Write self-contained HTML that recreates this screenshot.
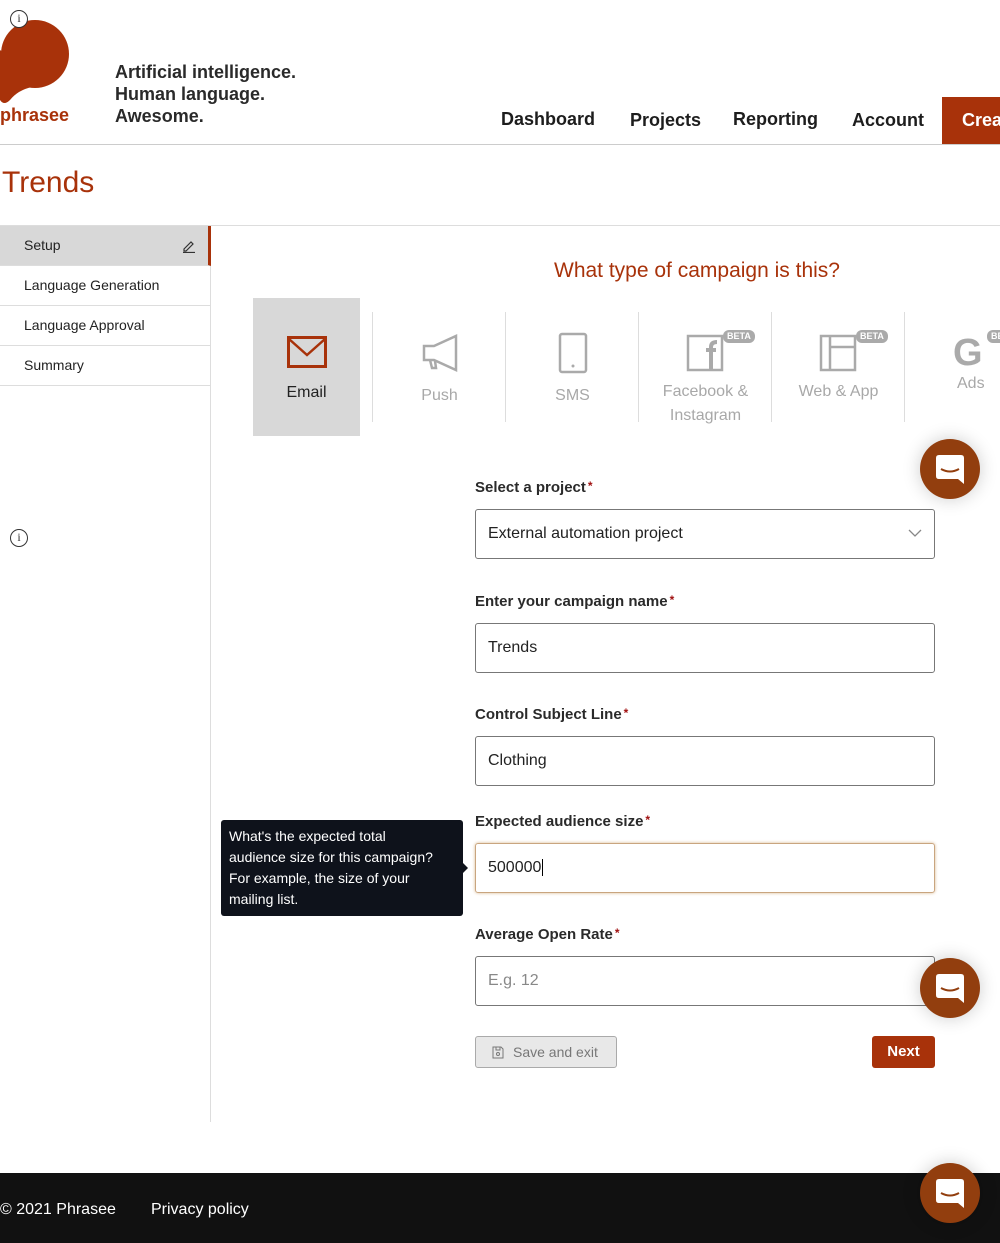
<!DOCTYPE html>
<html><head><meta charset="utf-8"><style>
*{box-sizing:border-box;margin:0;padding:0}
body{width:1000px;height:1243px;position:relative;overflow:hidden;background:#fff;font-family:"Liberation Sans",sans-serif;color:#222}
.a{position:absolute;white-space:nowrap}
.nav{font-size:18px;font-weight:bold;color:#1d1d1d;top:109px}
.side{position:absolute;left:0;width:210px;height:40px;border-bottom:1px solid #ddd;font-size:14px;padding:11px 0 0 24px;color:#222}
.lbl{font-size:15px;font-weight:bold;color:#2a2a2a;left:475px}
.lbl span{color:#a01010;font-size:12px;vertical-align:top;margin-left:2px}
.inp{position:absolute;left:475px;width:460px;height:50px;border:1px solid #777;border-radius:3px;font-size:16px;padding:15px 0 0 12px;color:#222}
.tab{position:absolute;top:312px;height:110px;border-left:1px solid #ddd;text-align:center;font-size:16px;color:#a8a8a8}
.beta{position:absolute;background:#aaa;color:#fff;font-size:9px;font-weight:bold;border-radius:6px;padding:1px 4px;line-height:11px}
.chat{position:absolute;left:920px;width:60px;height:60px;border-radius:50%;background:#923e0e;box-shadow:0 0 18px rgba(0,0,0,.2)}
.info{position:absolute;width:18px;height:18px;border:1.5px solid #333;border-radius:50%;font-size:12px;text-align:center;line-height:15px;font-family:"Liberation Serif",serif;color:#333}
</style></head><body>
<svg class="a" style="left:0;top:14px" width="72" height="92" viewBox="0 0 72 92"><circle cx="35" cy="40" r="34" fill="#a8320a"/><path d="M0 36L0 86Q4 92 10 86Q18 76 32 73L10 44Z" fill="#a8320a"/></svg>
<div class="info" style="left:10px;top:10px;background:#fff">i</div>
<div class="a" style="left:0;top:105px;font-size:18px;font-weight:bold;color:#a8320a">phrasee</div>
<div class="a" style="left:115px;top:61px;font-size:18px;font-weight:bold;line-height:22px;color:#2a2a2a">Artificial intelligence.<br>Human language.<br>Awesome.</div>
<div class="a nav" style="left:501px">Dashboard</div>
<div class="a nav" style="left:630px;top:110px">Projects</div>
<div class="a nav" style="left:733px">Reporting</div>
<div class="a nav" style="left:852px;top:110px">Account</div>
<div class="a" style="left:942px;top:97px;width:58px;height:47px;background:#a8320a;color:#fff;font-size:18px;font-weight:bold;padding:13px 0 0 20px">Create</div>
<div class="a" style="left:0;top:144px;width:1000px;height:1px;background:#ccc"></div>
<div class="a" style="left:2px;top:166px;font-size:30px;color:#a8320a">Trends</div>
<div class="a" style="left:0;top:225px;width:1000px;height:1px;background:#ddd"></div>
<div class="side" style="top:226px;background:#d8d8d8;border-right:3px solid #a8320a;width:211px">Setup
<svg style="position:absolute;left:182px;top:13px" width="14" height="14" viewBox="0 0 14 14"><path d="M2 10L9 3L11 5L4 12H2Z M1 13.5H13" fill="none" stroke="#333" stroke-width="1.2"/></svg></div>
<div class="side" style="top:266px">Language Generation</div>
<div class="side" style="top:306px">Language Approval</div>
<div class="side" style="top:346px">Summary</div>
<div class="a" style="left:210px;top:266px;width:1px;height:856px;background:#ddd"></div>
<div class="info" style="left:10px;top:529px">i</div>
<div class="a" style="left:554px;top:259px;font-size:21px;color:#a8320a">What type of campaign is this?</div>
<div class="a" style="left:253px;top:298px;width:107px;height:138px;background:#d8d8d8;text-align:center;font-size:16px;color:#222;padding-top:38px">
<svg width="40" height="32" viewBox="0 0 40 32"><rect x="1.5" y="1.5" width="37" height="29" fill="none" stroke="#a8320a" stroke-width="3"/><path d="M2 3L20 19L38 3" fill="none" stroke="#a8320a" stroke-width="2.5"/></svg>
<div style="margin-top:11px">Email</div></div>
<div class="tab" style="left:372px;width:134px;padding-top:22px"><svg width="40" height="38" viewBox="0 0 40 38"><path d="M4 12H14L36 2V36L14 26H4Z M10 26L12 34H16L15 27" fill="none" stroke="#aaa" stroke-width="2.5"/></svg><div style="margin-top:10px">Push</div></div>
<div class="tab" style="left:505px;width:134px;padding-top:20px"><svg width="30" height="42" viewBox="0 0 30 42"><rect x="2" y="2" width="26" height="38" rx="2" fill="none" stroke="#aaa" stroke-width="2.5"/><circle cx="15" cy="34" r="1.5" fill="#aaa"/></svg><div style="margin-top:8px">SMS</div></div>
<div class="tab" style="left:638px;width:134px;padding-top:22px;line-height:24px"><svg width="40" height="38" viewBox="0 0 40 38"><rect x="2" y="2" width="34" height="34" fill="none" stroke="#aaa" stroke-width="2.5"/><path d="M20 16H30M25 36V13Q25 8 31 8" fill="none" stroke="#aaa" stroke-width="4"/></svg><div>Facebook &amp;<br>Instagram</div><div class="beta" style="left:84px;top:18px">BETA</div></div>
<div class="tab" style="left:771px;width:134px;padding-top:22px;line-height:24px"><svg width="40" height="38" viewBox="0 0 40 38"><rect x="2" y="2" width="34" height="34" fill="none" stroke="#aaa" stroke-width="2.5"/><path d="M11 2V36M11 13H36" fill="none" stroke="#aaa" stroke-width="2.5"/></svg><div>Web &amp; App</div><div class="beta" style="left:84px;top:18px">BETA</div></div>
<div class="tab" style="left:904px;width:134px;padding-top:22px;line-height:24px;text-align:left"><div style="font-size:38px;font-weight:bold;line-height:38px;margin-left:48px;color:#aaa">G</div><div style="margin-left:52px">Ads</div><div class="beta" style="left:82px;top:18px">BETA</div></div>
<div class="chat" style="top:439px"><svg style="position:absolute;left:16px;top:16px" width="30" height="30" viewBox="0 0 30 30"><path d="M3 0H25Q28 0 28 3V29L22 24H3Q0 24 0 21V3Q0 0 3 0Z" fill="#fff"/><path d="M5 14Q14 19 23 14" fill="none" stroke="#923e0e" stroke-width="2"/></svg></div>
<div class="a lbl" style="top:479px">Select a project<span>*</span></div>
<div class="inp" style="top:509px">External automation project<svg style="position:absolute;right:12px;top:19px" width="14" height="9" viewBox="0 0 14 9"><path d="M1 1L7 7L13 1" fill="none" stroke="#888" stroke-width="1.3"/></svg></div>
<div class="a lbl" style="top:593px">Enter your campaign name<span>*</span></div>
<div class="inp" style="top:623px">Trends</div>
<div class="a lbl" style="top:706px">Control Subject Line<span>*</span></div>
<div class="inp" style="top:736px">Clothing</div>
<div class="a lbl" style="top:813px">Expected audience size<span>*</span></div>
<div class="inp" style="top:843px;border-color:#c9a57f;box-shadow:0 0 3px #d8b890">500000<span style="border-left:1px solid #000;margin-left:1px"></span></div>
<div class="a" style="left:221px;top:820px;width:242px;height:96px;background:#0e121b;border-radius:3px;color:#fff;font-size:14px;line-height:21px;padding:6px 8px">What's the expected total<br>audience size for this campaign?<br>For example, the size of your<br>mailing list.</div>
<div class="a" style="left:463px;top:863px;border:5px solid transparent;border-left-color:#0e121b;border-right:0"></div>
<div class="a lbl" style="top:926px">Average Open Rate<span>*</span></div>
<div class="inp" style="top:956px;color:#888">E.g. 12</div>
<div class="chat" style="top:958px"><svg style="position:absolute;left:16px;top:16px" width="30" height="30" viewBox="0 0 30 30"><path d="M3 0H25Q28 0 28 3V29L22 24H3Q0 24 0 21V3Q0 0 3 0Z" fill="#fff"/><path d="M5 14Q14 19 23 14" fill="none" stroke="#923e0e" stroke-width="2"/></svg></div>
<div class="a" style="left:475px;top:1036px;width:142px;height:32px;background:#e8e8e8;border:1px solid #aaa;border-radius:3px;font-size:14px;color:#777;padding:7px 0 0 37px">Save and exit
<svg style="position:absolute;left:16px;top:9px" width="12" height="13" viewBox="0 0 12 13"><path d="M1 1H9L11 3V12H1Z M4 1V4H8V1" fill="none" stroke="#777"/><circle cx="6" cy="8" r="1.5" fill="none" stroke="#777"/></svg></div>
<div class="a" style="left:872px;top:1036px;width:63px;height:32px;background:#a8320a;border-radius:3px;color:#fff;font-size:15px;font-weight:bold;text-align:center;padding-top:7px">Next</div>
<div class="a" style="left:0;top:1173px;width:1000px;height:70px;background:#111"></div>
<div class="a" style="left:0;top:1201px;font-size:16px;color:#fff">© 2021 Phrasee</div>
<div class="a" style="left:151px;top:1201px;font-size:16px;color:#fff">Privacy policy</div>
<div class="chat" style="top:1163px"><svg style="position:absolute;left:16px;top:16px" width="30" height="30" viewBox="0 0 30 30"><path d="M3 0H25Q28 0 28 3V29L22 24H3Q0 24 0 21V3Q0 0 3 0Z" fill="#fff"/><path d="M5 14Q14 19 23 14" fill="none" stroke="#923e0e" stroke-width="2"/></svg></div>
</body></html>
